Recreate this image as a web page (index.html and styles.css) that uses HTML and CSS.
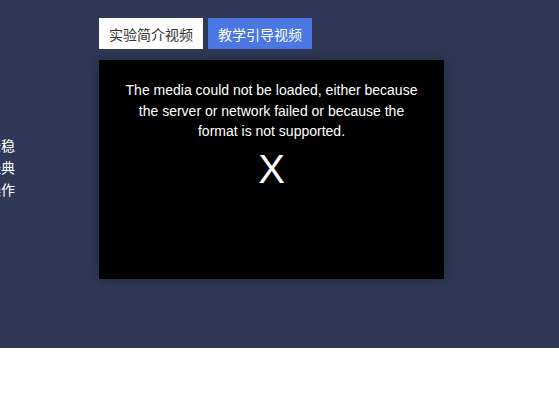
FILE: index.html
```html
<!DOCTYPE html>
<html lang="zh-CN">
<head>
    <meta charset="UTF-8">
    <meta name="viewport" content="width=device-width, initial-scale=1.0">
    <title>实验视频</title>
    <link rel="stylesheet" href="styles.css">
</head>
<body>
    <div class="banner">
        <div class="intro">
            <p class="line"><span>系统运行安全稳</span></p>
            <p class="line"><span>实验内容经典</span></p>
            <p class="line"><span>便于学生操作</span></p>
        </div>
        <div class="player">
            <div class="tabs">
                <button class="tab">实验简介视频</button>
                <button class="tab active">教学引导视频</button>
            </div>
            <div class="video">
                <p class="errorText">The media could not be loaded, either because the server or network failed or because the format is not supported.</p>
                <p class="errorMark">X</p>
            </div>
        </div>
    </div>
</body>
</html>
```

FILE: styles.css
```css
html{
    height: 100%;
}
body{
    margin: 0;
    padding: 0;
    background: #ffffff;
    font-family: "Liberation Sans", Arial, "Noto Sans CJK SC", sans-serif;
}

.banner{
    height: 348px;
    box-sizing: border-box;
    padding-top: 18px;
    background: #2f3957;
    display: grid;
    grid-template-columns: 99px 345px;
}

.intro{
    width: 15px;
    overflow: hidden;
    padding-top: 117px;
    color: #ffffff;
    font-size: 14px;
    line-height: 22px;
}
.line{
    margin: 0;
    display: flex;
    justify-content: flex-end;
    white-space: nowrap;
}

.tabs{
    display: flex;
    gap: 5px;
}
.tab{
    width: 104px;
    height: 31px;
    padding: 0;
    border: none;
    background: #ffffff;
    color: #333333;
    font-family: "Noto Sans CJK SC", sans-serif;
    font-size: 14px;
    cursor: pointer;
}
.tab.active{
    background: #4a77e2;
    color: #ffffff;
}

.video{
    margin-top: 11px;
    height: 219px;
    box-sizing: border-box;
    padding: 20px 20px 0;
    background: #000000;
    color: #ffffff;
    text-align: center;
    box-shadow: 0 0 12px rgba(0, 0, 0, 0.35);
}
.errorText{
    margin: 0;
    font-size: 14px;
    line-height: 20.7px;
}
.errorMark{
    margin: 5px 0 0;
    font-size: 40px;
}
```
